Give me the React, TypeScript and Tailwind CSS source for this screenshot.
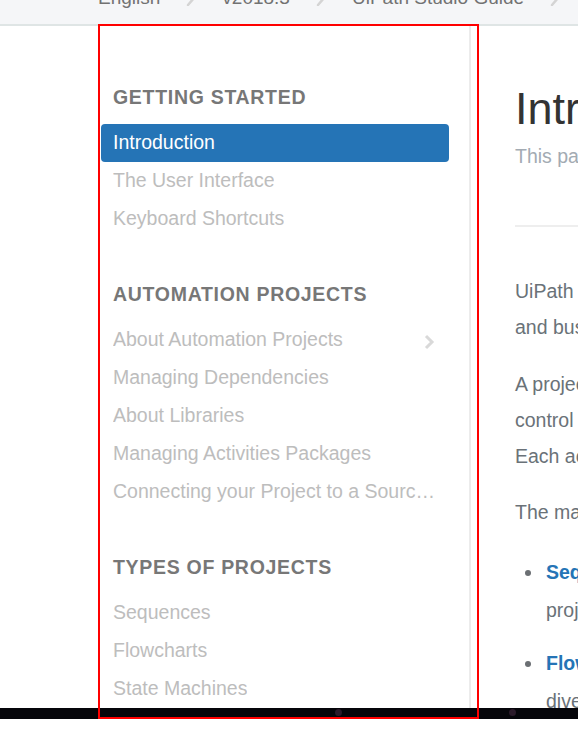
import { ReactNode } from 'react';

type Section = {
  title: string;
  items: string[];
};

const sections: Section[] = [
  {
    title: 'Getting Started',
    items: ['Introduction', 'The User Interface', 'Keyboard Shortcuts']
  },
  {
    title: 'Automation Projects',
    items: [
      'About Automation Projects',
      'Managing Dependencies',
      'About Libraries',
      'Managing Activities Packages',
      'Connecting your Project to a Source Control System'
    ]
  },
  {
    title: 'Types of Projects',
    items: ['Sequences', 'Flowcharts', 'State Machines']
  }
];

const crumbs = ['English', 'v2018.3', 'UiPath Studio Guide'];

function Crumb() {
  return (
    <svg width="10" height="16" viewBox="0 0 10 16" className="shrink-0 -mx-[1px]">
      <path d="M2 1 L8 8 L2 15" fill="none" stroke="#d4d4d4" strokeWidth="2.5" strokeLinecap="round" />
    </svg>
  );
}

function NavItem({ label, active, hasChildren }: { label: string; active?: boolean; hasChildren?: boolean }) {
  return (
    <li
      className={`flex items-center h-[38px] px-3 rounded-[4px] ${
        active ? 'bg-[#2574b6] text-white' : 'text-[#bdbdbd]'
      }`}
    >
      <span className="truncate leading-[37px] -mt-[1px]">{label}</span>
      {hasChildren && (
        <svg width="12" height="16" viewBox="0 0 12 16" className="ml-auto shrink-0 mr-[2px] mt-[3px]">
          <path d="M3 2 L9 8 L3 14" fill="none" stroke="#d9d9d9" strokeWidth="3" />
        </svg>
      )}
    </li>
  );
}

function Bullet({ title, children }: { title: string; children: ReactNode }) {
  return (
    <li className="flex leading-[38px]">
      <span className="w-[18px] shrink-0 flex justify-start pt-[17px] pl-[10px]">
        <span className="block w-[6px] h-[6px] rounded-full bg-[#6b6f73]" />
      </span>
      <p className="pl-[13px]">
        <span className="font-bold text-[#2574b6]">{title}</span>
        {children}
      </p>
    </li>
  );
}

export default function App() {
  return (
    <div className="relative w-[578px] h-[744px] overflow-hidden bg-white font-['Liberation_Sans',Arial,sans-serif]">
      {/* breadcrumb bar, mostly scrolled off */}
      <div className="h-[26px] bg-[#f5f6f8] border-b-2 border-[#dfe5e5] overflow-hidden">
        <div className="flex items-center gap-[27px] pl-[98px] -mt-[12px] h-[20px] text-[19px] leading-[20px] text-[#727272] whitespace-nowrap">
          {crumbs.map((c) => (
            <div key={c} className="flex items-center gap-[27px]">
              <span>{c}</span>
              <Crumb />
            </div>
          ))}
        </div>
      </div>

      <div className="flex h-[682px]">
        <nav className="w-[471px] shrink-0 pl-[101px] pr-[20px] pt-[59px] border-r-2 border-[#ececec] text-[19.5px]">
          {sections.map((section, i) => (
            <div key={section.title} className={i > 0 ? 'mt-[44px]' : ''}>
              <h3 className="px-3 text-[19.5px] leading-[25px] font-bold uppercase tracking-[0.7px] text-[#777777]">
                {section.title}
              </h3>
              <ul className="mt-[14px]">
                {section.items.map((item) => (
                  <NavItem
                    key={item}
                    label={item}
                    active={item === 'Introduction'}
                    hasChildren={item === 'About Automation Projects'}
                  />
                ))}
              </ul>
            </div>
          ))}
        </nav>

        <main className="flex-1 overflow-hidden pl-[44px]">
          <div className="w-[640px] whitespace-nowrap">
            <h1 className="mt-[58px] text-[45px] leading-[50px] text-[#333333]">Introduction</h1>
            <p className="mt-[8px] text-[19.5px] leading-[28px] text-[#a3abb3]">
              This page provides an overview of UiPath Studio.
            </p>
            <div className="mt-[55px] h-[2px] bg-[#eeeeee]" />
            <div className="text-[19.5px] leading-[36px] text-[#6a7278]">
              <p className="mt-[46px]">
                UiPath Studio is a tool that enables you to design automation projects
                <br />
                and business processes in a visual way.
              </p>
              <p className="mt-[21px]">
                A project is an automated business process, built from activities and
                <br />
                control flow elements, arranged in a specific order.
                <br />
                Each activity performs a single action.
              </p>
              <p className="mt-[20px]">The main types of projects are:</p>
              <ul className="mt-[23px] flex flex-col gap-[15px]">
                <Bullet title="Sequences"> – suitable for linear processes, the simplest
                  <br />
                  projects you can build.
                </Bullet>
                <Bullet title="Flowcharts"> – suitable for more complex processes, with
                  <br />
                  diverse branching logic.
                </Bullet>
              </ul>
            </div>
          </div>
        </main>
      </div>

      {/* dark strip at the bottom edge of the capture */}
      <div className="relative h-[11px] bg-[#05050a]">
        <span className="absolute left-[335px] top-[1px] w-[7px] h-[7px] rounded-full bg-[#2a1a2a]" />
        <span className="absolute left-[509px] top-[1px] w-[7px] h-[7px] rounded-full bg-[#2a1a2a]" />
      </div>

      {/* annotation frame */}
      <div className="absolute left-[98px] top-[24px] w-[381px] h-[695px] border-2 border-[#ff0000] pointer-events-none" />
    </div>
  );
}
